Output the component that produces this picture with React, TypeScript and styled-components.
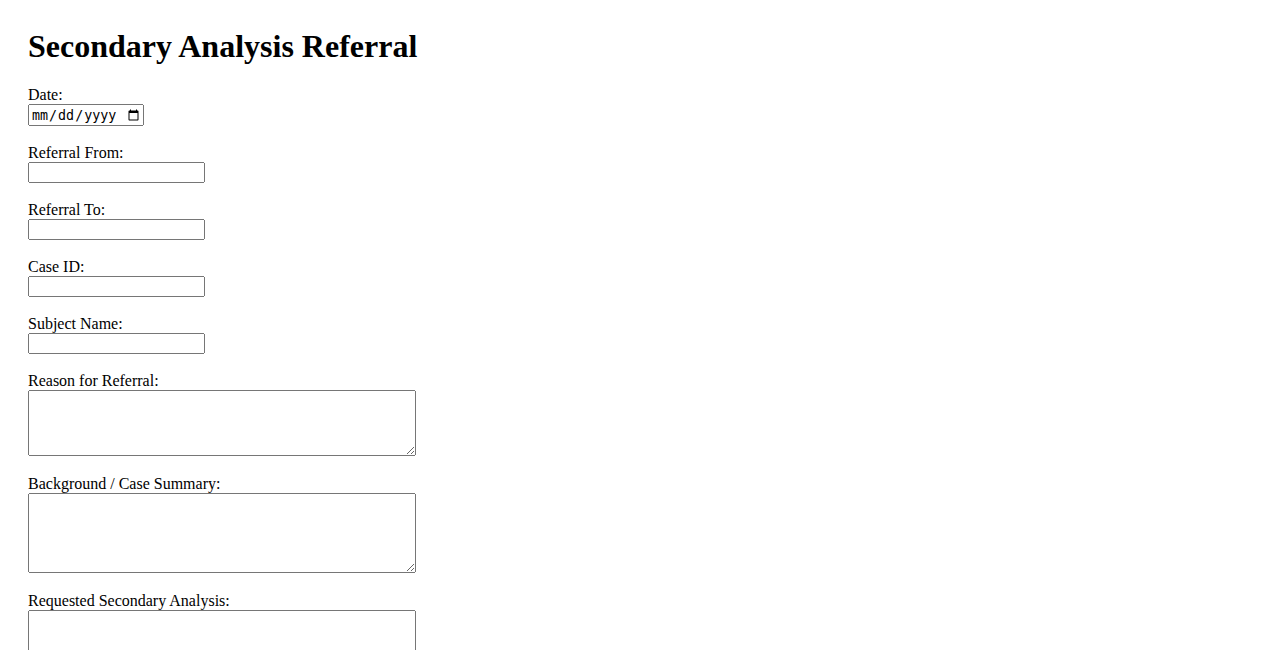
import React from "react";
import styled, { createGlobalStyle } from "styled-components";

const GlobalStyle = createGlobalStyle`
  body {
    margin: 8px;
    background: #ffffff;
    color: #000000;
    font-family: "Liberation Serif", "Times New Roman", serif;
    font-size: 16px;
  }
`;

const Page = styled.div`
  padding: 20px;
`;

const Title = styled.h1`
  font-family: "Liberation Serif", "Times New Roman", serif;
  font-size: 32px;
  font-weight: bold;
  margin: 0 0 21.44px 0;
`;

const Form = styled.form`
  margin: 0;
`;

const Group = styled.div<{ $space: number }>`
  margin-bottom: ${(p) => p.$space}px;
`;

const Label = styled.label`
  display: block;
`;

const TextInput = styled.input`
  box-sizing: border-box;
  width: 177px;
  height: 21px;
`;

const DateInput = styled.input`
  box-sizing: border-box;
  width: 116px;
  height: 22px;
`;

const TextArea = styled.textarea<{ $height: number }>`
  box-sizing: border-box;
  width: 388px;
  height: ${(p) => p.$height}px;
`;

type Field =
  | { id: string; label: string; kind: "date" }
  | { id: string; label: string; kind: "text" }
  | { id: string; label: string; kind: "area"; height: number };

const fields: Field[] = [
  { id: "date", label: "Date:", kind: "date" },
  { id: "from", label: "Referral From:", kind: "text" },
  { id: "to", label: "Referral To:", kind: "text" },
  { id: "case", label: "Case ID:", kind: "text" },
  { id: "subject", label: "Subject Name:", kind: "text" },
  { id: "reason", label: "Reason for Referral:", kind: "area", height: 66 },
  { id: "background", label: "Background / Case Summary:", kind: "area", height: 80 },
  { id: "requested", label: "Requested Secondary Analysis:", kind: "area", height: 81 },
];

export default function App() {
  return (
    <>
      <GlobalStyle />
      <Page>
        <Title>Secondary Analysis Referral</Title>
        <Form onSubmit={(e) => e.preventDefault()}>
          {fields.map((f) => (
            <Group key={f.id} $space={f.kind === "area" ? 15 : 18}>
              <Label htmlFor={f.id}>{f.label}</Label>
              {f.kind === "date" && <DateInput type="date" id={f.id} name={f.id} />}
              {f.kind === "text" && <TextInput type="text" id={f.id} name={f.id} />}
              {f.kind === "area" && <TextArea id={f.id} name={f.id} $height={f.height} />}
            </Group>
          ))}
        </Form>
      </Page>
    </>
  );
}
